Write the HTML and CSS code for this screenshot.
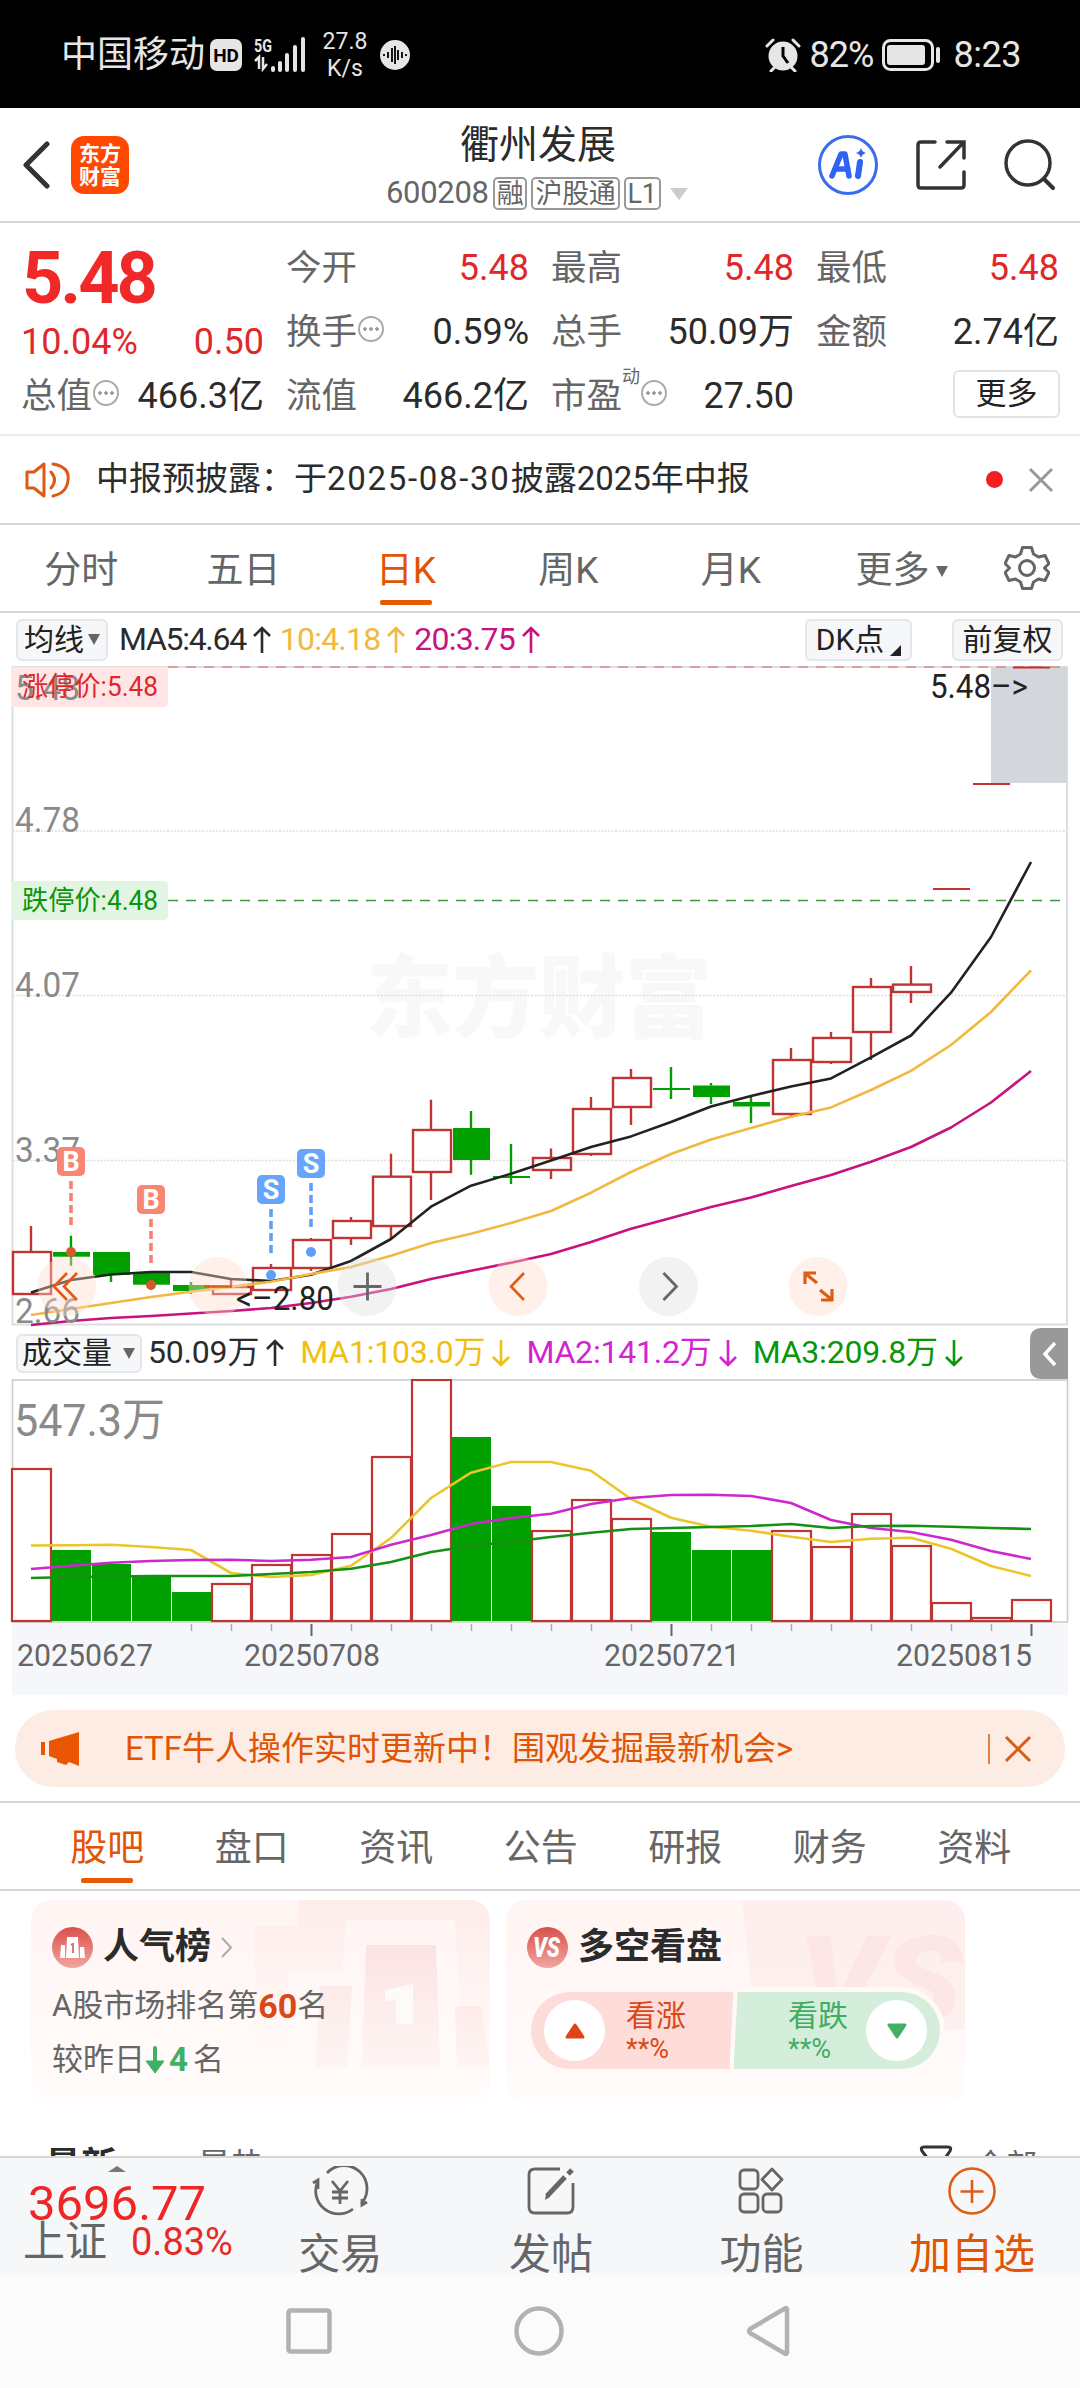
FILE: index.html
```html
<!DOCTYPE html>
<html lang="zh-CN">
<head>
    <meta charset="UTF-8">
    <meta name="viewport" content="width=device-width, initial-scale=1.0">
    <title>衢州发展 600208</title>
    <link rel="stylesheet" href="styles.css">
</head>
<body>
    <div class="status-bar">
        <span class="carrier">中国移动</span>
        <span class="hd">HD</span>
        <svg class="signal" width="54" height="36" viewBox="0 0 54 36">
            <text x="0" y="15" font-size="18" font-weight="700" fill="#e6e6e6" textLength="18" lengthAdjust="spacingAndGlyphs">5G</text>
            <path d="M1 24l4-4v12M9 20v12l4-5" fill="none" stroke="#e6e6e6" stroke-width="2.5"/>
            <path d="M19 31v2M26 26v7M33 18v15M41 10v23M49 2v31" stroke="#e6e6e6" stroke-width="4" stroke-linecap="round"/>
        </svg>
        <span class="speed">27.8<br>K/s</span>
        <svg class="voice" width="30" height="30" viewBox="0 0 30 30">
            <circle cx="15" cy="15" r="15" fill="#e6e6e6"/>
            <path d="M4 14v2M8 12v6M12 8v14M15 6v18M18 10v10M22 12v6M26 14v2" stroke="#000" stroke-width="1.8"/>
        </svg>
        <div class="status-right">
            <svg width="36" height="34" viewBox="0 0 36 34">
                <circle cx="18" cy="18" r="14.500" fill="#e6e6e6"/>
                <path d="M2 8l6-6M34 8l-6-6M6 33l4-4M30 33l-4-4" stroke="#e6e6e6" stroke-width="3" stroke-linecap="round"/>
                <path d="M18 9v9l5 7" fill="none" stroke="#000" stroke-width="3"/>
            </svg>
            <span class="battery-text">82%</span>
            <svg width="59" height="32" viewBox="0 0 59 32">
                <rect x="1.5" y="1.5" width="49" height="29" rx="7" fill="none" stroke="#e6e6e6" stroke-width="3"/>
                <rect x="5" y="6" width="38" height="20" rx="3" fill="#e6e6e6"/>
                <path d="M56 10v12" stroke="#e6e6e6" stroke-width="4" stroke-linecap="round"/>
            </svg>
            <span class="clock">8:23</span>
        </div>
    </div>

    <header class="header">
        <svg class="back" width="28" height="48" viewBox="0 0 28 48"><path d="M25 3L4 24l21 21" fill="none" stroke="#333" stroke-width="5" stroke-linecap="round" stroke-linejoin="round"/></svg>
        <div class="logo">东方<br>财富</div>
        <div class="title">
            <h1>衢州发展</h1>
            <div class="code">600208<span class="tag">融</span><span class="tag">沪股通</span><span class="tag">L1</span><i class="down"></i></div>
        </div>
        <svg class="ai" width="62" height="62" viewBox="0 0 62 62">
            <circle cx="31" cy="31" r="28.5" fill="none" stroke="#3a6cf0" stroke-width="3"/>
            <path d="M15 42l9-22h4l4 22M19 35h12" fill="none" stroke="#2f63f3" stroke-width="5.5" stroke-linejoin="round" stroke-linecap="round"/>
            <path d="M43 28l-2 14" stroke="#2f63f3" stroke-width="6" stroke-linecap="round"/>
            <path d="M44 14q1 4 5 5q-4 1-5 5q-1-4-5-5q4-1 5-5z" fill="#2f63f3"/>
        </svg>
        <svg class="share" width="50" height="50" viewBox="0 0 50 50"><path d="M19 2H5q-3 0-3 3v40q0 3 3 3h40q3 0 3-3V32M31 2h17v16M47 3L24 27" fill="none" stroke="#333" stroke-width="3.5" stroke-linecap="round"/></svg>
        <svg class="search" width="52" height="52" viewBox="0 0 52 52"><circle cx="24" cy="24" r="22" fill="none" stroke="#333" stroke-width="3.5"/><path d="M40 40l9 9" stroke="#333" stroke-width="4" stroke-linecap="round"/></svg>
    </header>

    <section class="quote">
        <div class="price">
            <div class="last">5.48</div>
            <div class="change"><span>10.04%</span><span>0.50</span></div>
        </div>
        <div class="item"><label>今开</label><b class="up">5.48</b></div>
        <div class="item"><label>最高</label><b class="up">5.48</b></div>
        <div class="item"><label>最低</label><b class="up">5.48</b></div>
        <div class="item"><label>换手<i class="info"></i></label><b>0.59%</b></div>
        <div class="item"><label>总手</label><b>50.09万</b></div>
        <div class="item"><label>金额</label><b>2.74亿</b></div>
        <div class="item"><label>总值<i class="info"></i></label><b>466.3亿</b></div>
        <div class="item"><label>流值</label><b>466.2亿</b></div>
        <div class="item"><label>市盈<sup>动</sup><i class="info"></i></label><b>27.50</b></div>
        <div class="item"><span></span><button class="more">更多</button></div>
    </section>

    <section class="notice">
        <svg width="46" height="38" viewBox="0 0 46 38"><path d="M2 11h7l10-8v32l-10-8H2zM26 11q7 8 0 16M28 3q17 3 15 16q-1 13-15 16" fill="none" stroke="#dd5a12" stroke-width="3" stroke-linejoin="round" stroke-linecap="round"/></svg>
        <span class="notice-text">中报预披露：于<span class="day">2025-08-30</span>披露2025年中报</span>
        <i class="dot"></i>
        <svg width="26" height="26" viewBox="0 0 26 26"><path d="M2 2l22 22M24 2L2 24" stroke="#999" stroke-width="3"/></svg>
    </section>

    <nav class="periods">
        <a>分时</a>
        <a>五日</a>
        <a class="active">日K</a>
        <a>周K</a>
        <a>月K</a>
        <a class="wide">更多<i class="caret"></i></a>
        <svg class="gear" width="46" height="46" viewBox="0 0 46 46"><path d="M18.500 2.500h9l2 6.500 5 3 6.500-1.500 4 8-4.500 4.500 4.500 4.500-4 8-6.500-1.500-5 3-2 6.500h-9l-2-6.500-5-3-6.500 1.500-4-8 4.500-4.500-4.500-4.500 4-8 6.500 1.500 5-3z" fill="none" stroke="#666" stroke-width="3" stroke-linejoin="round"/><circle cx="23" cy="23" r="7.500" fill="none" stroke="#666" stroke-width="3"/></svg>
    </nav>

    <div class="indicator">
        <button class="chip avg">均线<i class="caret"></i></button>
        <span class="ma first">MA5:4.64<svg class="arrow"><path d="M10 28V3M2 11l8-8 8 8"/></svg></span>
        <span class="ma yellow">10:4.18<svg class="arrow"><path d="M10 28V3M2 11l8-8 8 8"/></svg></span>
        <span class="ma magenta">20:3.75<svg class="arrow"><path d="M10 28V3M2 11l8-8 8 8"/></svg></span>
        <button class="chip dk">DK点<i class="corner"></i></button>
        <button class="chip adjust">前复权</button>
    </div>

    <svg id="kline" width="1080" height="661" viewBox="0 666 1080 661"></svg>

    <div class="indicator volume-head">
        <button class="chip">成交量<i class="caret"></i></button>
        <span class="ma">50.09万<svg class="arrow"><path d="M10 28V3M2 11l8-8 8 8"/></svg></span>
        <span class="ma gold">MA1:103.0万<svg class="arrow"><path d="M10 2v25M2 19l8 8 8-8"/></svg></span>
        <span class="ma violet">MA2:141.2万<svg class="arrow"><path d="M10 2v25M2 19l8 8 8-8"/></svg></span>
        <span class="ma green">MA3:209.8万<svg class="arrow"><path d="M10 2v25M2 19l8 8 8-8"/></svg></span>
        <svg class="drawer" width="38" height="51" viewBox="0 0 38 51"><path d="M38 0H12Q0 0 0 12v27q0 12 12 12h26z" fill="#999"/><path d="M25 15L15 26l10 11" fill="none" stroke="#fff" stroke-width="3.500"/></svg>
    </div>

    <svg id="volume" width="1080" height="316" viewBox="0 1379 1080 316"></svg>

    <div class="banner">
        <svg width="40" height="34" viewBox="0 0 40 34"><path d="M8 9L38 0v34l-10-4-3 3-9-3v-3l-8-3zM0 10h4v13H0z" fill="#ea5504"/></svg>
        <span>ETF牛人操作实时更新中！围观发掘最新机会&gt;</span>
        <svg class="banner-close" width="44" height="30" viewBox="0 0 44 30"><path d="M1 0v30" stroke="#dd5a12" stroke-width="1.500"/><path d="M18 3l24 24M42 3L18 27" stroke="#dd5a12" stroke-width="3"/></svg>
    </div>

    <nav class="sections">
        <a class="active">股吧</a>
        <a>盘口</a>
        <a>资讯</a>
        <a>公告</a>
        <a>研报</a>
        <a>财务</a>
        <a>资料</a>
    </nav>

    <main class="feed">
        <div class="cards">
            <div class="card">
                <svg class="card-bg" width="459" height="204" viewBox="0 0 459 204">
                    <defs>
                        <linearGradient id="fade" x1="0" y1="0" x2="0" y2="1"><stop offset="0" stop-color="#f7cfcf" stop-opacity=".5"/><stop offset="1" stop-color="#fbe3e1" stop-opacity=".25"/></linearGradient>
                        <linearGradient id="halo" x1="0" y1="0" x2="0" y2="1"><stop offset="0" stop-color="#fde6e4" stop-opacity=".6"/><stop offset="1" stop-color="#fff5f3" stop-opacity="0"/></linearGradient>
                        <linearGradient id="badge" x1="0" y1="0" x2="0" y2="1"><stop offset="0" stop-color="#d9504c"/><stop offset="1" stop-color="#f2a5a0"/></linearGradient>
                    </defs>
                    <path d="M268 0h191v190h-25L424 20H315l-4 50h-54v80h-33V26h42z" fill="url(#halo)"/>
                    <path d="M335 45h70l4 122h-78zM289 86h32l-5 81h-32zM424 106h26l9 61h-33z" fill="url(#fade)"/>
                    <path d="M354 90l28-6v40h-17V99l-11 3z" fill="#fffafa"/>
                </svg>
                <h2><svg width="41" height="41" viewBox="0 0 41 41"><circle cx="20.500" cy="20.500" r="20.500" fill="url(#badge)"/><path d="M15 10h11l1 21H14zM9 18h4v13H8zM28 20h4l1 11h-5z" fill="#fff"/><path d="M19 18l2-1v9" fill="none" stroke="#e07470" stroke-width="2"/></svg>人气榜<svg class="chevron" width="12" height="21" viewBox="0 0 12 21"><path d="M1 1l9 9.500L1 20" fill="none" stroke="#aaa" stroke-width="2"/></svg></h2>
                <p>A股市场排名第<strong>60</strong>名</p>
                <p>较昨日<svg width="20" height="28" viewBox="0 0 20 28"><path d="M10 2v16" stroke="#40b062" stroke-width="4" stroke-linecap="round"/><path d="M1 15h18l-9 12z" fill="#40b062" stroke="#40b062" stroke-linejoin="round"/></svg><em>4</em>名</p>
            </div>
            <div class="card">
                <svg class="card-bg" width="459" height="204" viewBox="0 0 459 204">
                    <path d="M236 0h223v130H250z" fill="#fdeaea" fill-opacity=".55"/>
                    <text x="292" y="122" class="vs-bg" textLength="164" lengthAdjust="spacingAndGlyphs">VS</text>
                </svg>
                <h2><svg width="41" height="41" viewBox="0 0 41 41"><circle cx="20.500" cy="20.500" r="20.500" fill="url(#badge)"/><text x="6" y="30" class="vs" textLength="27" lengthAdjust="spacingAndGlyphs">VS</text></svg>多空看盘</h2>
                <div class="vote">
                    <div class="bull">
                        <span class="knob"><svg width="20" height="16" viewBox="0 0 20 16"><path d="M10 2l8 12H2z" fill="#e04316" stroke="#e04316" stroke-width="3" stroke-linejoin="round"/></svg></span>
                        <span class="vote-text">看涨<small>**%</small></span>
                    </div>
                    <div class="bear">
                        <span class="vote-text">看跌<small>**%</small></span>
                        <span class="knob"><svg width="20" height="16" viewBox="0 0 20 16"><path d="M10 14L2 2h16z" fill="#40b062" stroke="#40b062" stroke-width="3" stroke-linejoin="round"/></svg></span>
                    </div>
                </div>
            </div>
        </div>
        <div class="sort">
            <b>最新</b>
            <span>最热</span>
            <svg width="34" height="36" viewBox="0 0 34 36"><path d="M5 2h24q4 0 2 4l-9 13v14h-9V19L3 6Q1 2 5 2z" fill="none" stroke="#333" stroke-width="3"/></svg>
            <span class="all">全部</span>
        </div>
    </main>

    <footer class="toolbar">
        <div class="index">
            <i class="expand"></i>
            <div class="points">3696.77</div>
            <div class="sse">上证<span>0.83%</span></div>
        </div>
        <a>
            <svg width="58" height="50" viewBox="0 0 58 50"><path d="M16 7a23 23 0 0 1 34 31M42 43A23 23 0 0 1 7 15M2 17l5-3v9M51 33v6l5-3M21 15l8 10 8-10M29 25v13M21 26h16M21 32h16" fill="none" stroke="#666" stroke-width="2.800"/></svg>
            交易
        </a>
        <a>
            <svg width="48" height="50" viewBox="0 0 48 50"><path d="M33 3H8Q2 3 2 9v32q0 6 6 6h32q6 0 6-6V17" fill="none" stroke="#666" stroke-width="2.800"/><path d="M38 11L20 30" stroke="#666" stroke-width="5"/><path d="M41 8l4-4" stroke="#666" stroke-width="5"/><path d="M18 34l1-6 4 3z" fill="#666"/></svg>
            发帖
        </a>
        <a>
            <svg width="46" height="50" viewBox="0 0 46 50"><g fill="none" stroke="#666" stroke-width="2.800" stroke-linejoin="round"><rect x="2" y="4" width="18" height="19" rx="4"/><path d="M34 3l10 10.500L34 24 24 13.500z"/><rect x="2" y="28" width="18" height="18" rx="4"/><rect x="25" y="28" width="18" height="18" rx="4"/></g></svg>
            功能
        </a>
        <a class="add">
            <svg width="50" height="50" viewBox="0 0 50 50"><circle cx="25" cy="25" r="22.500" fill="none" stroke="#df5c14" stroke-width="2.600"/><path d="M25 14v23M13.500 25.500h23" stroke="#df5c14" stroke-width="2.600"/></svg>
            加自选
        </a>
    </footer>

    <div class="system-nav">
        <svg width="46" height="46" viewBox="0 0 46 46"><rect x="2.500" y="2.500" width="41" height="41" rx="2" fill="none" stroke="#b2b2b2" stroke-width="4.500"/></svg>
        <svg width="50" height="50" viewBox="0 0 50 50"><circle cx="25" cy="25" r="22.500" fill="none" stroke="#b2b2b2" stroke-width="4.500"/></svg>
        <svg width="44" height="52" viewBox="0 0 44 52"><path d="M41 4v44q-1 2-3 0L4 28q-2-2 0-4L38 4q2-2 3 0z" fill="none" stroke="#b2b2b2" stroke-width="4.500" stroke-linejoin="round"/></svg>
    </div>

    <script src="chart.js"></script>
</body>
</html>
```

FILE: styles.css
```css
:root {
    --orange: #df5505;
    --red: #e0282a;
    --gray: #666;
    --line: #d6d6d6;
}

* {
    box-sizing: border-box;
}

body {
    width: 1080px;
    height: 2388px;
    margin: 0;
    overflow: hidden;
    background: #fff;
    color: #2b2b2b;
    font-family: Roboto, "Noto Sans CJK SC", sans-serif;
    font-size: 36px;
    line-height: 1.3;
}

svg {
    display: block;
    flex: none;
}

svg text {
    font-family: Roboto, "Noto Sans CJK SC", sans-serif;
}

i {
    display: block;
    flex: none;
}

button {
    font-family: inherit;
    color: #222;
    padding: 0;
    display: flex;
    align-items: center;
}

/* status bar */
.status-bar {
    display: flex;
    align-items: center;
    height: 108px;
    padding: 2px 0 0 61px;
    background: #000;
    color: #e6e6e6;
}

.hd {
    width: 32px;
    height: 32px;
    margin-left: 5px;
    border-radius: 7px;
    background: #e6e6e6;
    color: #000;
    font-size: 19px;
    font-weight: 700;
    line-height: 33px;
    text-align: center;
}

.signal {
    margin-left: 12px;
}

.speed {
    width: 46px;
    margin-left: 14px;
    font-size: 23px;
    line-height: 27px;
    text-align: center;
}

.voice {
    margin-left: 12px;
}

.status-right {
    display: flex;
    align-items: center;
    margin-left: auto;
    margin-right: 59px;
}

.battery-text {
    width: 66px;
    margin: 0 6px 0 9px;
    letter-spacing: -1px;
}

.clock {
    margin-left: 13px;
    letter-spacing: -.5px;
}

/* header */
.header {
    display: flex;
    align-items: center;
    height: 115px;
    padding: 0 24px 0 22px;
    border-bottom: 2px solid var(--line);
}

.logo {
    width: 58px;
    height: 58px;
    margin-left: 21px;
    border-radius: 13px;
    background: #ff4800;
    color: #fff;
    font-size: 21px;
    font-weight: 700;
    line-height: 23px;
    padding-top: 7px;
    text-align: center;
}

.title {
    width: 304px;
    margin-left: 257px;
    padding-top: 4px;
}

h1 {
    margin: 0;
    font-size: 39px;
    font-weight: 400;
    line-height: 54px;
    text-align: center;
}

.code {
    display: flex;
    align-items: center;
    height: 44px;
    color: var(--gray);
    font-size: 31px;
    letter-spacing: -.3px;
    white-space: nowrap;
}

.tag {
    flex: none;
    height: 33px;
    margin-left: 4px;
    padding: 0 2px;
    border: 2px solid #999;
    border-radius: 5px;
    font-size: 27px;
    line-height: 30px;
}

.down {
    margin-left: 9px;
    border: 9px solid transparent;
    border-top: 12px solid #ccc;
    border-bottom: 0;
}

.ai {
    margin-left: 127px;
}

.share {
    margin-left: 37px;
}

.search {
    margin-left: auto;
}

/* quote */
.quote {
    display: grid;
    grid-template-columns: repeat(4, 243px);
    grid-template-rows: repeat(3, 64px);
    column-gap: 22px;
    height: 213px;
    padding: 13px 21px 0;
    border-bottom: 2px solid #ececec;
}

.price {
    grid-row: span 2;
    color: var(--red);
}

.last {
    height: 82px;
    padding-left: 1px;
    color: #f02828;
    font-size: 72px;
    font-weight: 700;
    line-height: 86px;
    letter-spacing: -3px;
}

.change {
    display: flex;
    justify-content: space-between;
    line-height: 48px;
}

.item {
    display: flex;
    align-items: center;
    justify-content: space-between;
}

.item label {
    display: flex;
    align-items: center;
    color: var(--gray);
    font-size: 35.5px;
}

.item b {
    font-weight: 400;
}

.item b.up {
    color: var(--red);
}

.item sup {
    align-self: flex-start;
    margin-top: -6px;
    font-size: 18px;
    line-height: 20px;
}

.info {
    width: 26px;
    height: 26px;
    margin: -5px 0 0 1px;
    border: 2px solid #aaa;
    border-radius: 50%;
    background: radial-gradient(circle, #999 1.5px, transparent 2px) center / 6px 22px;
    background-clip: content-box;
    padding: 0 2px;
}

.more {
    justify-content: center;
    width: 107px;
    height: 48px;
    margin: -5px -1px 0 0;
    border: 2px solid #e3e3e3;
    border-radius: 6px;
    background: #fff;
    font-size: 31px;
    line-height: 40px;
}

/* notice */
.notice {
    display: flex;
    align-items: center;
    height: 89px;
    padding: 0 26px 0 25px;
    border-bottom: 2px solid var(--line);
}

.notice-text {
    margin-left: 25px;
    font-size: 33px;
}

.day {
    letter-spacing: 1.7px;
}

.dot {
    width: 17px;
    height: 17px;
    margin: 0 25px 0 auto;
    border-radius: 50%;
    background: #f02020;
}

/* tabs */
.periods,
.sections {
    display: flex;
    align-items: center;
    height: 88px;
    color: var(--gray);
    font-size: 37px;
    border-bottom: 2px solid var(--line);
}

.periods a,
.sections a {
    position: relative;
    width: 162.4px;
    padding-top: 6px;
    text-align: center;
}

.periods .wide {
    display: flex;
    align-items: center;
    justify-content: center;
    width: 180px;
}

.active {
    color: var(--orange);
}

.active::after {
    content: "";
    position: absolute;
    left: 50%;
    bottom: -10px;
    width: 52px;
    height: 5px;
    margin-left: -26px;
    border-radius: 2px;
    background: #e65a06;
}

.caret {
    margin-left: 7px;
    border: 6.5px solid transparent;
    border-top: 11px solid #666;
    border-bottom: 0;
}

.gear {
    margin-left: 12px;
}

/* indicator rows */
.indicator {
    display: flex;
    align-items: center;
    height: 53px;
    padding: 0 17px 0 16px;
    font-size: 32px;
}

.chip {
    justify-content: center;
    height: 42px;
    border: 2px solid #e3e6ea;
    border-radius: 6px;
    background: #f6f7f9;
    font-size: 30px;
    line-height: 36px;
}

.chip .caret {
    margin-left: 4px;
}

.avg {
    width: 92px;
}

.dk {
    width: 107px;
    margin: 0 40px 0 auto;
}

.adjust {
    width: 111px;
}

.corner {
    align-self: flex-end;
    margin: 0 0 3px 6px;
    border-bottom: 11px solid #222;
    border-left: 11px solid transparent;
}

.ma {
    display: flex;
    align-items: center;
    margin-left: 8px;
    letter-spacing: -.8px;
}

.ma.first {
    margin-left: 11px;
    letter-spacing: -1.3px;
}

.arrow {
    width: 20px;
    height: 30px;
    margin-left: 6px;
    fill: none;
    stroke: currentColor;
    stroke-width: 2.6;
}

.yellow { color: #f2b840; }
.magenta { color: #c8127e; }
.gold { color: #f0c010; }
.violet { color: #d224d2; }
.green { color: #0a960a; }

.volume-head {
    height: 52px;
    padding-right: 12px;
}

.volume-head .chip {
    width: 126px;
    height: 39px;
    padding: 0 5px 0 4px;
    justify-content: space-between;
}

.volume-head .ma {
    margin-left: 6px;
    letter-spacing: -.2px;
}

.volume-head .ma + .ma {
    margin-left: 15px;
}

.drawer {
    margin-left: auto;
}

#kline .axis {
    fill: #8a8a8a;
    font-size: 35px;
}

#kline .watermark {
    fill: #f8f8f8;
    font-size: 90px;
    font-weight: 900;
}

#kline .limit {
    font-size: 27px;
}

#kline .mark {
    fill: #fff;
    font-size: 27px;
    font-weight: 700;
    text-anchor: middle;
}

#kline .tip {
    fill: #222;
    font-size: 34px;
}

#volume .peak {
    fill: #8a8a8a;
    font-size: 45px;
}

#volume .date {
    fill: #666;
    font-size: 31px;
}

/* banner */
.banner {
    display: flex;
    align-items: center;
    height: 77px;
    margin: 15px 15px 14px;
    padding: 0 33px 0 26px;
    border-radius: 38px;
    background: #fcece3;
    color: var(--orange);
    font-size: 33px;
}

.banner span {
    margin: 2px 0 0 44px;
}

.banner-close {
    margin-left: auto;
}

.sections {
    height: 90px;
    padding-left: 35px;
    border-top: 2px solid var(--line);
}

.sections a {
    width: 144.5px;
}

/* cards */
.feed {
    height: 267px;
    padding-top: 9px;
    overflow: hidden;
    border-bottom: 2px solid var(--line);
}

.cards {
    display: flex;
    gap: 16px;
    padding-left: 31px;
}

.card {
    position: relative;
    width: 459px;
    height: 204px;
    padding: 21px 21px 0;
    border-radius: 20px;
    overflow: hidden;
    background: linear-gradient(#fff5f3, #fffcfb);
}

.card-bg {
    position: absolute;
    left: 0;
    top: 0;
}

.card > *:not(.card-bg) {
    position: relative;
}

h2 {
    display: flex;
    align-items: center;
    gap: 10px;
    height: 52px;
    margin: 0 0 6px;
    font-size: 36px;
    font-weight: 700;
}

.card p {
    display: flex;
    align-items: center;
    height: 54px;
    margin: 0;
    color: var(--gray);
    font-size: 31px;
}

.card strong {
    color: #db4816;
    font-size: 34px;
}

.card em {
    margin: 0 5px 0 4px;
    color: #40b062;
    font-size: 33px;
    font-style: normal;
    font-weight: 700;
}

.vs,
.vs-bg {
    font-style: italic;
    font-weight: 900;
    fill: #fff;
    font-size: 27px;
}

.vs-bg {
    fill: #fae0e0;
    fill-opacity: .6;
    font-size: 120px;
}

.vote {
    display: flex;
    width: 419px;
    height: 87px;
    margin: 14px 0 0 -1px;
    border: 5px solid #fff9f8;
    border-radius: 44px;
    overflow: hidden;
    background: #fff9f8;
}

.bull,
.bear {
    display: flex;
    align-items: center;
    width: 209px;
    padding: 0 13px;
}

.bull {
    background: #fddcd9;
    color: #db4816;
    clip-path: polygon(0 0, 98% 0, 96% 100%, 0 100%);
}

.bear {
    justify-content: flex-end;
    margin-left: -4px;
    background: #d5eedc;
    color: #40ad62;
    clip-path: polygon(2% 0, 100% 0, 100% 100%, 0 100%);
}

.knob {
    display: flex;
    align-items: center;
    justify-content: center;
    width: 61px;
    height: 61px;
    border-radius: 50%;
    background: #fff;
}

.vote-text {
    margin: 0 18px 0 21px;
    font-size: 30px;
    line-height: 36px;
}

.vote-text small {
    display: block;
    font-size: 27px;
    line-height: 30px;
}

.sort {
    display: flex;
    align-items: flex-start;
    height: 60px;
    margin-top: 37px;
    padding: 0 43px 0 45px;
    font-size: 36px;
    line-height: 50px;
}

.sort span {
    margin-left: 80px;
    color: var(--gray);
    font-size: 34px;
}

.sort svg {
    margin: 4px 0 0 auto;
}

.sort .all {
    margin-left: 22px;
    font-size: 31px;
}

/* bottom */
.toolbar {
    display: flex;
    height: 115px;
    overflow: hidden;
    background: #f6f7f9;
    color: var(--gray);
}

.index {
    width: 235px;
}

.expand {
    width: 18px;
    margin: 8px 0 0 108px;
    border: 9px solid transparent;
    border-bottom: 6px solid #777;
    border-top: 0;
}

.points {
    height: 49px;
    margin: 3px 0 0 28px;
    color: #ee2626;
    font-size: 49px;
    line-height: 58px;
}

.sse {
    display: flex;
    align-items: center;
    height: 36px;
    padding-left: 23px;
    font-size: 42px;
    line-height: 36px;
}

.sse span {
    margin-left: 24px;
    color: #e52a2a;
    font-size: 38px;
}

.toolbar a {
    display: flex;
    flex-direction: column;
    align-items: center;
    width: 210.6px;
    padding-top: 8px;
    font-size: 42px;
    line-height: 78px;
}

.toolbar .add {
    color: var(--orange);
}

.system-nav {
    display: flex;
    align-items: center;
    height: 116px;
    padding-left: 286px;
    background: #fbfbfb;
}

.system-nav svg:nth-child(2) {
    margin: 0 182px;
}
```

FILE: chart.js
```javascript
const START = 31;
const STEP = 40;
const RED = "#c03434";
const GREEN = "#00a000";

// [high, body top, body bottom, low, color]
const candles = [
    [1226, 1252, 1294, 1294, "r"], [1235.7, 1252, 1256.7, 1265.7, "g"], [1252, 1252, 1275, 1282, "g"],
    [1273, 1273, 1284.7, 1290, "g"], [1282, 1285, 1291, 1294, "g"], [1279, 1287, 1294, 1294, "r"],
    [1264, 1268, 1290, 1290, "r"], [1238, 1240, 1268, 1271, "r"], [1217, 1221, 1238, 1245, "r"],
    [1153.7, 1176.7, 1226, 1239, "r"], [1099.7, 1130, 1172, 1200, "r"], [1111, 1128, 1160, 1174.7, "g"],
    [1144, 1176, 1178, 1184, "g"], [1148.5, 1158, 1170, 1179, "r"], [1097, 1109, 1154, 1156, "r"],
    [1069, 1078, 1107, 1125, "r"], [1067, 1088, 1090, 1099, "g"], [1083, 1085.5, 1097, 1104, "g"],
    [1097, 1102, 1106.5, 1123, "g"], [1048, 1060, 1114, 1118, "r"], [1032, 1038, 1062, 1064, "r"],
    [978, 987, 1032, 1060, "r"], [966, 984.6, 992, 1003, "r"], [889, 888, 889, 889, "r"],
    [783, 783, 784, 784, "r"], [667, 666.5, 667, 667, "r"]
];

const ma5 = [1292.5, 1280, 1274.5, 1272, 1272, 1279, 1281, 1274.7, 1261, 1239, 1206.7, 1185.7, 1173.7, 1160.5, 1147, 1136.4, 1122, 1106.5, 1096, 1086.4, 1078.4, 1057.4, 1035.5, 992.7, 937, 862];
const ma10 = [1315, 1309, 1303, 1297, 1291.7, 1286.7, 1281.7, 1274, 1267, 1255.7, 1243, 1233.7, 1223, 1211, 1192.7, 1172, 1154, 1139.5, 1128, 1116.8, 1107.4, 1090, 1070.8, 1045, 1012, 970.3];
const ma20 = [1325, 1321, 1318, 1316, 1313.5, 1311, 1308, 1303, 1296.7, 1289, 1279, 1270.7, 1262.7, 1254, 1242, 1228.8, 1218, 1207, 1197.6, 1186, 1175, 1161.8, 1147, 1127.5, 1102.5, 1071];

const volumes = [1469, 1550, 1564, 1577, 1592, 1584, 1565, 1555, 1534, 1457, 1380, 1437, 1506, 1531, 1500, 1519, 1532, 1550, 1550, 1531, 1547, 1514, 1546, 1603, 1618, 1600];
const vol1 = [1545.5, 1545.3, 1544.7, 1547, 1550, 1573, 1577, 1575, 1565.7, 1538, 1498, 1472.7, 1462, 1462, 1470.7, 1499, 1517.7, 1526.7, 1530.7, 1536.7, 1542, 1538.7, 1537.7, 1548.7, 1566, 1576];
const vol2 = [1569, 1565.7, 1562.7, 1561, 1560, 1559.7, 1561, 1559.7, 1557, 1544.7, 1535, 1524, 1518, 1513.7, 1504, 1498, 1495, 1494.7, 1496, 1503, 1520, 1528, 1532, 1539.7, 1551, 1559];
const vol3 = [1578, 1577, 1576.5, 1576, 1576, 1576, 1574, 1572, 1568.7, 1562, 1552, 1546, 1541.7, 1537, 1532.7, 1529, 1528, 1527, 1526, 1524, 1528, 1526, 1525.7, 1526.7, 1528, 1529];

const x = i => START + STEP * i;
const line = (data, color) =>
    `<polyline points="${data.map((y, i) => x(i) + "," + y).join(" ")}" fill="none" stroke="${color}" stroke-width="2.6" stroke-linejoin="round"/>`;
const text = (cls, tx, ty, w, str, extra = "") =>
    `<text class="${cls}" x="${tx}" y="${ty}" textLength="${w}" lengthAdjust="spacingAndGlyphs" ${extra}>${str}</text>`;

function drawKline() {
    let s = text("watermark", 366, 1030, 346, "东方财富");
    for (const y of [831, 995.5, 1160.5]) {
        s += `<path d="M13 ${y}H1067" stroke="#dedede" stroke-width="1.500" stroke-dasharray="2 1.500"/>`;
    }
    s += `<rect x="12.500" y="667" width="1054.500" height="657.500" fill="none" stroke="#dedede" stroke-width="2"/>`;
    s += `<rect x="991" y="667" width="76" height="116" fill="#d3d7dc"/>`;
    s += `<path d="M168 667H1062" stroke="#d88888" stroke-width="1.600" stroke-dasharray="10 8"/>`;
    s += `<path d="M168 900.500H1062" stroke="#3c963c" stroke-width="1.600" stroke-dasharray="10 8"/>`;

    candles.forEach(([high, top, bottom, low, type], i) => {
        const c = x(i);
        const color = type === "r" ? RED : GREEN;
        s += `<path d="M${c} ${high}V${top}M${c} ${bottom}V${low}" stroke="${color}" stroke-width="2.400"/>`;
        if (type === "r" && bottom - top > 2) {
            s += `<rect x="${c - 18}" y="${top}" width="38" height="${bottom - top}" fill="none" stroke="${color}" stroke-width="2.400"/>`;
        } else {
            s += `<rect x="${c - 18}" y="${top}" width="37" height="${Math.max(bottom - top, 2)}" fill="${color}"/>`;
        }
    });
    s += line(ma5, "#222") + line(ma10, "#f2b840") + line(ma20, "#c8127e");

    // limit prices
    s += `<path d="M12 667h156v35q0 5-5 5H12z" fill="#ffe5e5"/>`;
    s += `<path d="M12 881h151q5 0 5 5v29q0 5-5 5H12z" fill="#e2f4e2"/>`;
    s += text("limit", 22, 909.5, 136, "跌停价:4.48", `fill="#0a960a"`);
    [["5.48", 700], ["4.78", 832], ["4.07", 997], ["3.37", 1162], ["2.66", 1323]].forEach(([v, y]) => {
        s += text("axis", 15, y, 65, v);
    });
    s += text("limit", 22, 696, 136, "涨停价:5.48", `fill="#e0282a"`);

    [[71, 1147, "B", 1252], [151, 1185, "B", 1285], [271, 1175, "S", 1275], [311, 1149, "S", 1252]].forEach(([mx, my, v, dot]) => {
        const color = v === "B" ? "#f97f6e" : "#5f9ffb";
        s += `<rect x="${mx - 14}" y="${my}" width="28" height="29" rx="5" fill="${color}" fill-opacity=".95"/>`;
        s += `<text class="mark" x="${mx}" y="${my + 24}">${v}</text>`;
        s += `<path d="M${mx} ${my + 34}v45" stroke="${color}" stroke-width="3.600" stroke-dasharray="8 4"/>`;
        s += `<circle cx="${mx}" cy="${dot}" r="5" fill="${v === "B" ? "#d35a2c" : color}"/>`;
    });

    [[67, 1], [218, 1], [367, 0], [518, 1], [668.5, 0], [818, 1]].forEach(([cx, warm]) => {
        s += `<circle cx="${cx}" cy="1286.500" r="29.500" fill="${warm ? "#ffdcca" : "#dedede"}" fill-opacity=".4"/>`;
    });
    s += `<g fill="none" stroke="#df5c14" stroke-width="2.600"><path d="M67 1273l-13 13.500 13 13.500M77 1273l-13 13.500 13 13.500M204 1286.500h28M524 1273l-13 13.500 13 13.500"/>
        <path d="M805 1284v-11h11M806 1274l11 9M832 1289v11h-11M831 1299l-11-9" stroke-width="3.200"/></g>`;
    s += `<path d="M353.500 1286.500h28M367.500 1272.500v28M663.500 1273l13 13.500-13 13.500" fill="none" stroke="#666" stroke-width="2.800"/>`;
    s += text("tip", 236, 1310, 98, "&lt;–2.80") + text("tip", 930, 698, 98, "5.48–&gt;");
    document.getElementById("kline").innerHTML = s;
}

function drawVolume() {
    let s = `<rect x="12" y="1623" width="1056" height="72" fill="#f6f7fa"/>`;
    s += `<rect x="12.500" y="1380" width="1055" height="242" fill="none" stroke="#ccc" stroke-width="1.600"/>`;
    volumes.forEach((y, i) => {
        const left = x(i) - 19;
        if (candles[i][4] === "g") {
            s += `<rect x="${left}" y="${y}" width="39" height="${1621 - y}" fill="${GREEN}"/>`;
        } else {
            s += `<rect x="${left}" y="${y}" width="39" height="${1621 - y}" fill="#fff" stroke="${RED}" stroke-width="2.200"/>`;
        }
    });
    s += line(vol1, "#ecc52a") + line(vol2, "#cc28cc") + line(vol3, "#159015");
    s += text("peak", 14, 1436, 151, "547.3万");
    for (let i = 4; i < 26; i++) {
        const major = i === 7 || i === 16 || i === 25;
        s += `<path d="M${x(i) + .5} 1624v${major ? 12 : 7}" stroke="${major ? "#666" : "#aaa"}" stroke-width="${major ? 2 : 1.5}"/>`;
    }
    [["20250627", 17], ["20250708", 244], ["20250721", 604], ["20250815", 896]].forEach(([v, tx]) => {
        s += text("date", tx, 1666, 136, v);
    });
    document.getElementById("volume").innerHTML = s;
}

drawKline();
drawVolume();
```
